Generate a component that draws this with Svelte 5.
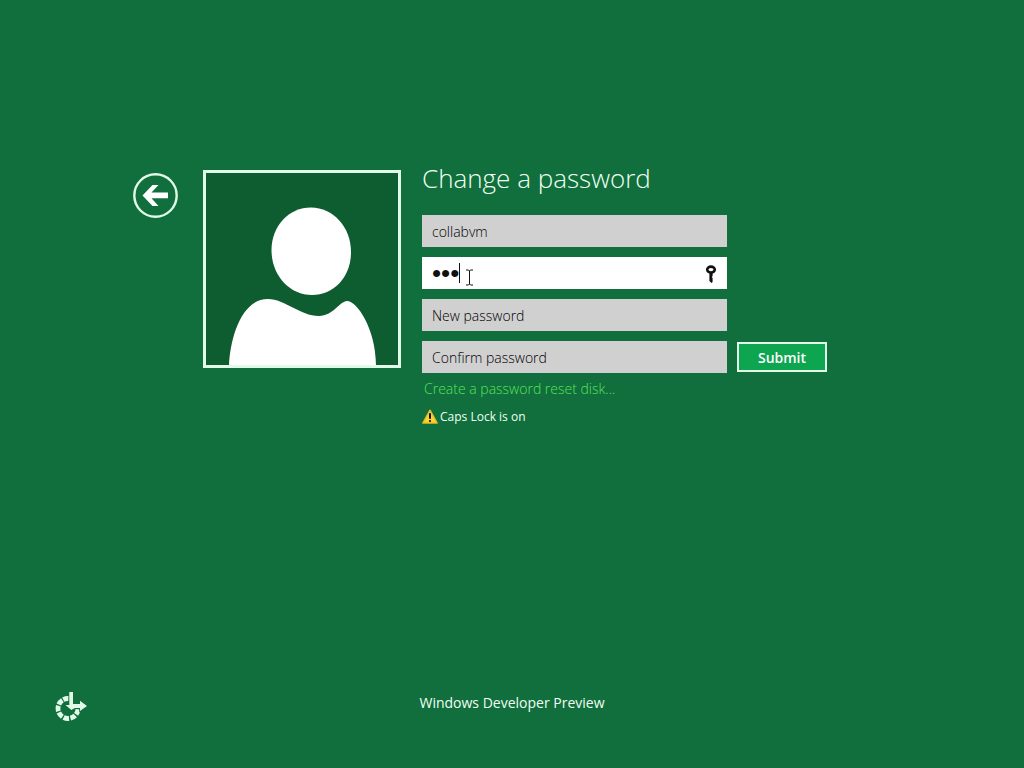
<script>
  let username = $state('collabvm');
  let oldPassword = $state('abc');
  let newPassword = $state('');
  let confirmPassword = $state('');

  let capsLock = $state(true);

  // Segmented ring of the ease of access icon, open at the upper right
  const segments = [20, 60, 100, 140, 180, 220, 258];

  function watchCaps(e) {
    if (e.getModifierState) capsLock = e.getModifierState('CapsLock');
  }

  function submit(e) {
    e.preventDefault();
  }
</script>

<svelte:window onkeydown={watchCaps} />

<div class="screen">
  <main>
    <button class="back" type="button" aria-label="Back">
      <svg viewBox="0 0 46 46" width="46" height="46" aria-hidden="true">
        <circle cx="23.5" cy="23.5" r="21.2" fill="none" stroke="#e2fbe9" stroke-width="2.4" />
        <path d="M10.500 23.500 L20.500 13 H26.500 L19.500 20.600 H36 V26.200 H19.500 L26.500 34 H20.500 Z" fill="#fff" />
      </svg>
    </button>

    <div class="tile">
      <svg viewBox="0 0 192 192" aria-hidden="true">
        <path d="M105 34.500C127 34.500 145 54 145 79C145 104 128 122 106 122C83 122 65.500 102 65.500 77C65.500 53 83 34.500 105 34.500Z" fill="#fff" />
        <path d="M23 193C24 168 34 126 62 126C79 126 94 143 113 143C127 143 134 128 141 128C151 128 170 156 170 193Z" fill="#fff" />
      </svg>
    </div>

    <form onsubmit={submit}>
      <h1>Change a password</h1>

      <input type="text" aria-label="User name" bind:value={username} />

      <div class="field">
        <input class="active" type="password" aria-label="Old password" bind:value={oldPassword} />
        <span class="caret"></span>
        <svg class="pointer" viewBox="0 0 9 17" width="9" height="17" aria-hidden="true">
          <path d="M1 1 H3.500 L4.500 2 L5.500 1 H8 M4.500 2 V15 M1 16 H3.500 L4.500 15 L5.500 16 H8" fill="none" stroke="#111" stroke-width="1" />
        </svg>
        <button class="reveal" type="button" aria-label="Password options">
          <svg viewBox="0 0 12 18" width="12" height="18" aria-hidden="true">
            <ellipse cx="6" cy="4.600" rx="3.800" ry="3" fill="none" stroke="#111" stroke-width="2.600" />
            <path d="M4.400 7 H7.600 V11 L6.800 12 L7.600 13 V17 L6.500 18 L4.400 16 Z" fill="#111" />
          </svg>
        </button>
      </div>

      <input type="password" placeholder="New password" aria-label="New password" bind:value={newPassword} />

      <input type="password" placeholder="Confirm password" aria-label="Confirm password" bind:value={confirmPassword} />
      <button class="submit" type="submit">Submit</button>

      <a class="reset" href="#reset">Create a password reset disk...</a>

      {#if capsLock}
        <p class="caps">
          <svg viewBox="0 0 16 16" width="16" height="16" aria-hidden="true">
            <path d="M8 1.200 L15.200 14 H0.800 Z" fill="#fbd52e" stroke="#e3bd2a" stroke-width="1.4" stroke-linejoin="round" />
            <path d="M8 5 V9" stroke="#111" stroke-width="2" stroke-linecap="round" />
            <circle cx="8" cy="12" r="1.100" fill="#111" />
          </svg>
          Caps Lock is on
        </p>
      {/if}
    </form>
  </main>

  <footer>
    <button class="access" type="button" aria-label="Ease of access">
      <svg viewBox="0 0 32 32" width="32" height="32" aria-hidden="true">
        {#each segments as angle}
          <path d="M12 -3.400 A12.500 12.500 0 0 1 12 3.400 L7.300 2.100 A7.600 7.600 0 0 0 7.300 -2.100 Z" transform="translate(13 17.5) rotate({angle})" fill="#e2fbe9" />
        {/each}
        <path d="M14.300 1 H18 V13 H25 V9.800 L32 15 L25 20 V17 H20 L16.300 19 L10.500 14 H14.300 Z" fill="#e2fbe9" stroke="#106f3c" stroke-width="1.6" paint-order="stroke" />
      </svg>
    </button>
    <span class="brand">Windows Developer Preview</span>
  </footer>
</div>

<style>
  :global(body) {
    margin: 0;
    background: #106f3c;
  }

  .screen {
    display: flex;
    flex-direction: column;
    justify-content: space-between;
    box-sizing: border-box;
    min-height: 100vh;
    padding: 160px 55px 45px;
    background: #106f3c;
    color: #f0fff4;
    font-family: 'Segoe UI', 'Open Sans', 'Noto Sans', sans-serif;
    font-size: 14px;
  }

  button {
    padding: 0;
    border: 0;
    background: none;
    color: inherit;
    font: inherit;
    cursor: pointer;
  }

  svg {
    display: block;
  }

  main {
    display: flex;
    align-items: flex-start;
    padding-left: 77px;
  }

  .back {
    margin: 12px 25px 0 0;
  }

  .tile {
    flex: none;
    width: 192px;
    margin: 10px 21px 0 0;
    border: 3px solid #e2fbe9;
    background: #0e5d31;
  }

  form {
    display: grid;
    grid-template-columns: 305px 90px;
    gap: 10px;
    align-items: center;
  }

  h1 {
    grid-column: 1 / -1;
    margin: 0;
    padding-bottom: 9px;
    font-size: 26px;
    font-weight: 300;
    line-height: 36px;
  }

  input {
    grid-column: 1;
    box-sizing: border-box;
    width: 100%;
    height: 32px;
    padding: 0 10px;
    border: 0;
    border-radius: 0;
    outline: 0;
    background: #d0d0d0;
    color: #000;
    font: inherit;
    font-weight: 300;
  }

  input::placeholder {
    color: #000;
    opacity: 1;
  }

  .field {
    grid-column: 1;
    position: relative;
  }

  .active {
    display: block;
    background: #fff;
    color: #111;
    font-family: 'Liberation Sans', Arial, sans-serif;
    font-size: 26px;
    font-weight: 400;
  }

  .caret {
    position: absolute;
    left: 37px;
    top: 6px;
    width: 1px;
    height: 20px;
    background: #111;
  }

  .pointer {
    position: absolute;
    left: 43px;
    top: 12px;
  }

  .reveal {
    position: absolute;
    right: 10px;
    top: 8px;
  }

  .submit {
    grid-column: 2;
    height: 30px;
    border: 2px solid #e2fbe9;
    background: #0ea551;
    color: #fff;
    font-weight: 600;
  }

  .reset {
    grid-column: 1 / -1;
    margin-top: -4px;
    padding-left: 2px;
    color: #5be05c;
    font-weight: 300;
    line-height: 20px;
    text-decoration: none;
  }

  .caps {
    grid-column: 1 / -1;
    display: flex;
    align-items: center;
    gap: 2px;
    margin: 0;
    font-size: 12px;
    line-height: 16px;
  }

  footer {
    display: grid;
    grid-template-columns: 1fr auto 1fr;
    align-items: start;
  }

  .access {
    justify-self: start;
  }

  .brand {
    line-height: 24px;
  }
</style>
